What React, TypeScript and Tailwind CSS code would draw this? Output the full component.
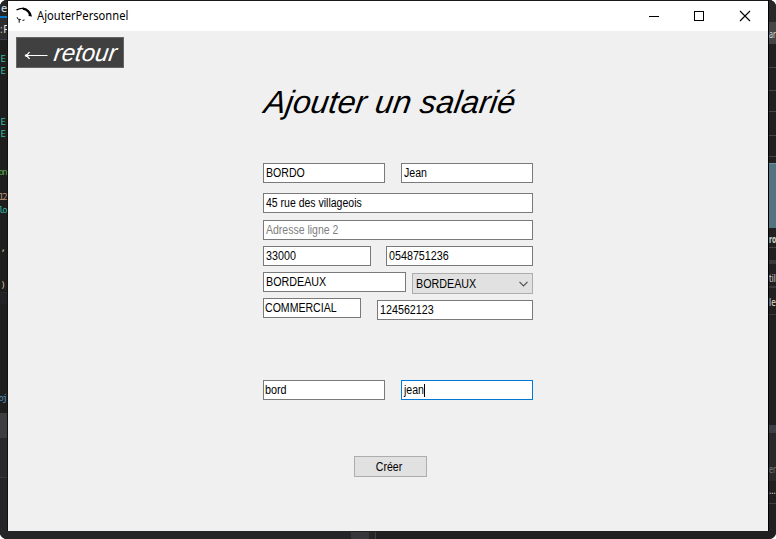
import React from 'react';

const ui = "font-['Liberation_Sans',Arial,sans-serif]";

function Field({ value, className = '', inner = 'scale-x-[.895]', muted = false, caret = false }: { value: string; className?: string; inner?: string; muted?: boolean; caret?: boolean }) {
  return (
    <div className={`flex h-5 shrink-0 items-center border bg-white pl-[2px] text-[12px] leading-[18px] ${caret ? 'border-[#0078d7]' : 'border-[#7a7a7a]'} ${muted ? 'text-[#808080]' : 'text-black'} ${className}`}>
      <span className={`inline-block origin-left whitespace-pre ${inner}`}>{value}</span>
      {caret && <span className="-ml-[3px] h-[13px] w-px bg-black" />}
    </div>
  );
}

function Code({ children, className }: { children: React.ReactNode; className: string }) {
  return (
    <div className={`flex h-3 shrink-0 justify-end whitespace-pre pr-px font-['DejaVu_Sans_Mono',monospace] text-[9px] leading-3 ${className}`}>
      {children}
    </div>
  );
}

function LeftEdge() {
  return (
    <div className="flex w-2 shrink-0 flex-col overflow-hidden border-r border-[#111] bg-[#1e1e1e]">
      <div className="h-[16px] shrink-0 bg-[#252526] pl-px font-['Noto_Sans',sans-serif] text-[11px] leading-[16px] text-[#d7e5f2]">e</div>
      <div className="h-[2px] shrink-0 bg-[#007acc]" />
      <div className="flex h-[22px] shrink-0 items-center gap-px border-b border-[#3f3f46] bg-[#2d2d30] font-['Noto_Sans',sans-serif] text-[10px] leading-3 tracking-[-0.5px] text-[#d8b58b]">
        <span>:</span>
        <span className="text-[#e4e4e4]">F</span>
      </div>
      <Code className="mt-[13px] text-[#35b99f]">E</Code>
      <Code className="text-[#35b99f]">E</Code>
      <Code className="mt-[39px] text-[#35b99f]">E</Code>
      <Code className="text-[#35b99f]">E</Code>
      <Code className="mt-[26px] tracking-[-1.7px] text-[#57a64a]">on</Code>
      <Code className="mt-[13px] tracking-[-1.7px] text-[#bd8e77]">12</Code>
      <Code className="mt-px tracking-[-1.7px] text-[#35b99f]">lo</Code>
      <Code className="mt-[26px] text-[#dccfa0]">,</Code>
      <Code className="mt-[25px] text-[#d8c08d]">)</Code>
      <div className="mt-px h-[12px] shrink-0 border-t border-[#29292b] bg-[#222224]" />
      <Code className="mt-[88px] tracking-[-1.7px] text-[#4e92c6]">oj</Code>
      <div className="mt-[9px] h-[25px] shrink-0 bg-[#3e3e42]" />
      <div className="h-[40px] shrink-0 border-b border-[#37373a] bg-[#29292b]" />
      <div className="grow bg-[#252527]" />
    </div>
  );
}

function RightEdge() {
  return (
    <div className="flex w-2 shrink-0 flex-col overflow-hidden border-l border-black bg-[#202020] font-['Noto_Sans',sans-serif] text-[11px] text-[#d8d8d8]">
      <div className="h-[22px] shrink-0 bg-[#29292c]" />
      <div className="h-[22px] shrink-0 bg-[#454545] leading-[23px]"><span className="inline-block origin-left scale-x-[.65]">ar</span></div>
      <div className="h-[24px] shrink-0 border-b border-[#454547]" />
      <div className="h-[23px] shrink-0 border-b border-[#454547]" />
      <div className="h-[21px] shrink-0 border-b border-[#454547]" />
      <div className="h-[24px] shrink-0 border-b border-[#454547]" />
      <div className="h-[21px] shrink-0 border-b border-[#454547]" />
      <div className="mt-[6px] h-[65px] shrink-0 border-t border-[#6d8d9b] bg-[#537382]" />
      <div className="h-[20px] shrink-0 border-b border-[#454547] font-bold leading-[22px]"><span className="inline-block origin-left scale-x-[.62]">ro</span></div>
      <div className="mt-[12px] h-[4px] shrink-0 bg-[#38383d]" />
      <div className="h-[24px] shrink-0 border-b-2 border-[#38383d] leading-[27px]"><span className="inline-block origin-left scale-x-[.7]">til</span></div>
      <div className="mt-[3px] h-[24px] shrink-0 border-b border-[#38383d] leading-[22px]"><span className="inline-block origin-left scale-x-[.75]">le</span></div>
      <div className="mt-[110px] h-[8px] shrink-0 bg-[#3e3e48]" />
      <div className="h-[48px] shrink-0 bg-[#29292c] pt-[26px] leading-[20px] text-[#737373]"><span className="inline-block origin-left scale-x-[.65]">er</span></div>
      <div className="h-[23px] shrink-0 border-b border-[#3f3f42] leading-[17px]"><span className="inline-block origin-left scale-x-[.75]">...</span></div>
    </div>
  );
}

function TitleBar() {
  return (
    <div className="flex h-[30px] shrink-0 items-center bg-white pl-[7px]">
      <svg width="18" height="18" viewBox="0 0 18 18" fill="none" stroke="#000" className="shrink-0">
        <path d="M1.5 3Q5 .8 9 1.5" strokeWidth="1.4" />
        <path d="M8 1.6Q14.5 3 15.5 9" strokeWidth="2.5" />
        <path d="M13.5 8.2l3.2 1" strokeWidth="1" />
        <path d="M2 10l.8 2.2" strokeWidth=".8" />
        <path d="M3.2 12.2l2.6.3M4.2 12.5v3.2M7.5 13.5l2-.6" strokeWidth="1" />
      </svg>
      <span className="ml-1 origin-left scale-x-[.93] font-['Noto_Sans',sans-serif] text-[12px] leading-4 text-black">AjouterPersonnel</span>
      <svg width="102" height="12" viewBox="0 0 102 12" fill="none" stroke="#000" className="ml-auto mr-[17px] shrink-0" shapeRendering="crispEdges">
        <path d="M0 6.5h10M45.5 1.5h9v9h-9z" />
        <path d="M91 1l10 10M101 1L91 11" shapeRendering="auto" strokeWidth="1.1" />
      </svg>
    </div>
  );
}

export default function App() {
  return (
    <div className="h-[539px] w-[776px] overflow-hidden bg-white">
      <div className={`flex h-full w-full flex-col overflow-hidden rounded-[7px] bg-[#202020] ${ui}`}>
        <div className="flex min-h-0 grow">
          <LeftEdge />
          <div className="flex w-[760px] shrink-0 flex-col">
            <div className="h-px shrink-0 bg-[#18181a]" />
            <TitleBar />
            <main className="flex h-[500px] shrink-0 flex-col bg-[#f0f0f0]">
              <button className="ml-2 mt-[6px] flex h-[31px] w-[108px] shrink-0 items-center border border-[#646464] bg-[#404040] pl-[7px] text-white">
                <svg width="24" height="9" viewBox="0 0 24 9" fill="none" stroke="currentColor" className="mt-[5px] shrink-0">
                  <path d="M1.5 4.5h22" strokeWidth="1.1" />
                  <path d="M5.5 1Q4 3.8 1 4.5Q4 5.2 5.5 8" strokeWidth="1.3" />
                </svg>
                <span className="ml-[5px] inline-block origin-[0_22px] -skew-x-[8deg] text-[24px] italic leading-7">retour</span>
              </button>
              <h1 className="ml-[255px] mt-[16px] h-[36px] w-fit origin-[0_29px] -skew-x-[9deg] whitespace-nowrap text-[32px] italic leading-[36px] tracking-[0.1px] text-black">Ajouter un salarié</h1>
              <form className="ml-[255px] mt-[43px] flex w-[270px] shrink-0 flex-col">
                <div className="flex justify-between">
                  <Field value="BORDO" className="w-[122px]" inner="scale-x-[.88]" />
                  <Field value="Jean" className="w-[132px]" inner="scale-x-[.88]" />
                </div>
                <Field value="45 rue des villageois" className="mt-[10px]" inner="scale-x-[.875]" />
                <Field value="Adresse ligne 2" className="mt-[7px]" inner="scale-x-[.875]" muted />
                <div className="mt-[6px] flex justify-between">
                  <Field value="33000" className="w-[108px]" />
                  <Field value="0548751236" className="w-[147px]" />
                </div>
                <div className="mt-[6px] flex h-[22px] items-start justify-between">
                  <Field value="BORDEAUX" className="w-[143px]" />
                  <div className="mt-px flex h-[21px] w-[121px] items-center justify-between border border-[#adadad] bg-[#e1e1e1] pl-[3px] pr-1 text-[12px] leading-[19px]">
                    <span className="origin-left translate-y-px scale-x-[.895]">BORDEAUX</span>
                    <svg width="9" height="6" viewBox="0 0 9 6" fill="none" stroke="#505050" strokeWidth="1.2"><path d="M.5 .8l4 4 4-4" /></svg>
                  </div>
                </div>
                <div className="mt-1 flex h-[22px] items-start justify-between">
                  <Field value="COMMERCIAL" className="w-[98px] pl-px!" inner="scale-x-[.88]" />
                  <Field value="124562123" className="mt-[2px] w-[156px]" />
                </div>
                <div className="mt-[60px] flex justify-between">
                  <Field value="bord" className="w-[122px] pl-px!" inner="scale-x-[.9]" />
                  <Field value="jean" className="w-[132px]" inner="scale-x-[.88]" caret />
                </div>
                <button className="ml-[91px] mt-14 flex h-[21px] w-[73px] items-center justify-center border border-[#adadad] bg-[#e1e1e1] pr-[2px] text-[12px] leading-[19px] text-black">
                  <span className="translate-y-px scale-x-[.88]">Créer</span>
                </button>
              </form>
            </main>
          </div>
          <RightEdge />
        </div>
        <div className="flex h-2 shrink-0 bg-[#202021]">
          <div className="w-[351px] bg-[#252527]" />
          <div className="mt-px w-[18px] bg-[#37373b]" />
          <div className="mt-px w-[7px] border-r border-[#3f3f42] bg-[#252527]" />
        </div>
      </div>
    </div>
  );
}
